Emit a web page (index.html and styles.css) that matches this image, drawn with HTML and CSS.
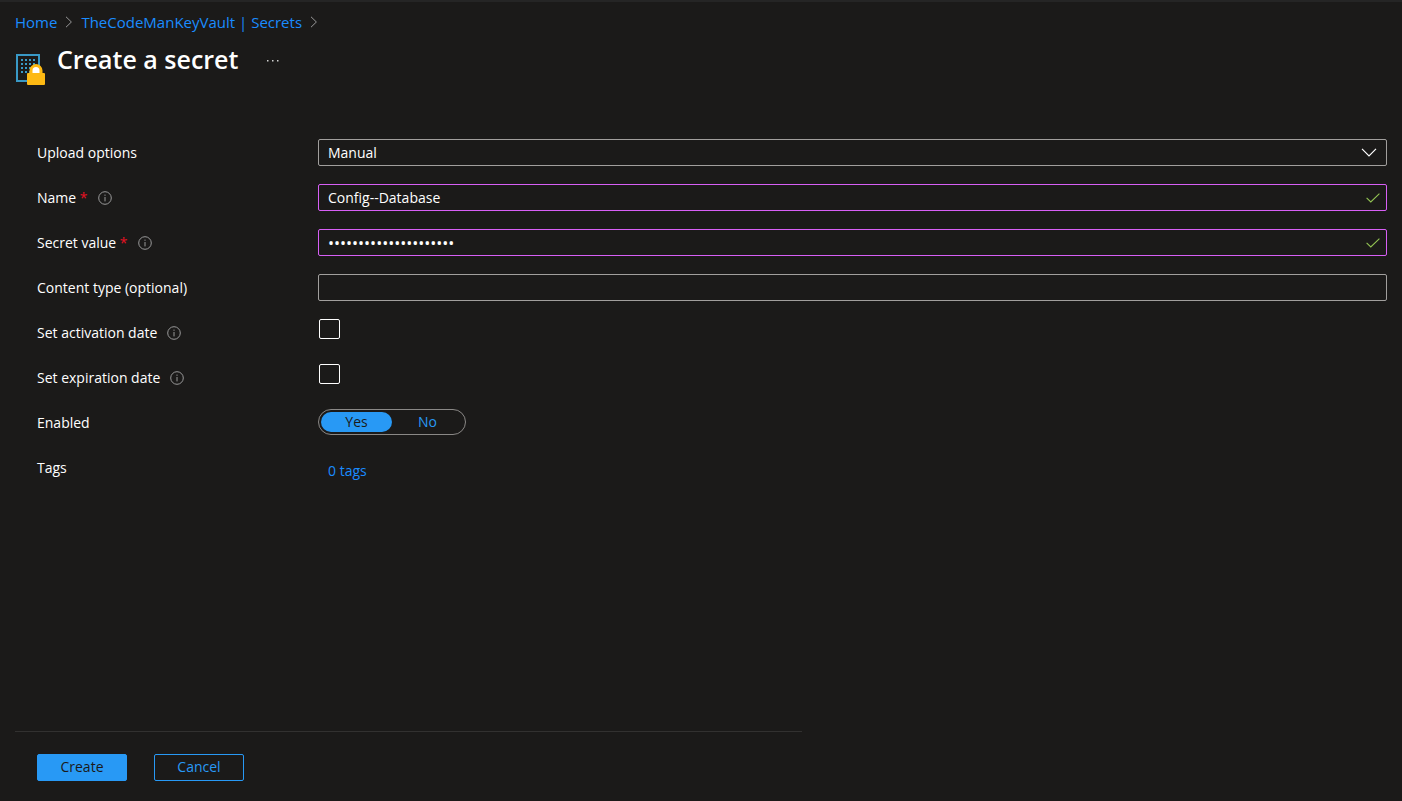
FILE: index.html
```html
<!DOCTYPE html>
<html lang="en">
<head>
<meta charset="utf-8">
<meta name="viewport" content="width=device-width, initial-scale=1">
<title>Create a secret</title>
<link rel="stylesheet" href="styles.css">
</head>
<body>
<svg class="symbols" aria-hidden="true">
  <symbol id="info" viewBox="0 0 14 14"><circle cx="7" cy="7" r="6.3" fill="none" stroke="currentColor"/><path d="M7 6v4.4M7 3.6v1.2" fill="none" stroke="currentColor"/></symbol>
  <symbol id="check" viewBox="0 0 14 10"><path d="M.6 4.8 4.8 9 13.4.6" fill="none" stroke="currentColor" stroke-width="1.1"/></symbol>
  <symbol id="crumb" viewBox="0 0 8 12"><path d="M1 .8 6.4 6 1 11.2" fill="none" stroke="currentColor"/></symbol>
</svg>
<header class="header">
  <nav class="breadcrumb" aria-label="Breadcrumb">
    <a href="#">Home</a>
    <svg class="crumb"><use href="#crumb"/></svg>
    <a href="#">TheCodeManKeyVault | Secrets</a>
    <svg class="crumb"><use href="#crumb"/></svg>
  </nav>
  <div class="heading">
    <svg class="logo" viewBox="0 0 30 32" aria-hidden="true">
      <rect x="1" y="1" width="22" height="26" fill="none" stroke="#3999c6" stroke-width="2"/>
      <path d="M5 6h14M5 10h14M5 14h14M5 18h14" fill="none" stroke="#3999c6" stroke-width="2" stroke-dasharray="2 2"/>
      <path d="M15 20v-3.500a5 5 0 0 1 10 0V20" fill="#fff" stroke="#fdb913" stroke-width="3"/>
      <rect x="11" y="19" width="18" height="12" rx="1" fill="#fdb913"/>
    </svg>
    <h1 class="title">Create a secret</h1>
    <button class="more" type="button" aria-label="More actions"><svg width="14" height="2" viewBox="0 0 14 2"><path d="M1 0h1.500v1.500H1zM6 0h1.500v1.500H6zM11 0h1.500v1.500H11z" fill="#d0d0d0"/></svg></button>
  </div>
</header>
<form class="form">
  <div class="fields">
    <div class="row">
      <div class="caption"><label for="upload">Upload options</label></div>
      <div class="control">
        <select class="box" id="upload"><option>Manual</option></select>
        <svg class="mark chevron" viewBox="0 0 16 9" aria-hidden="true"><path d="M1 .8 8 7.800 15 .8" fill="none" stroke="#fff" stroke-width="1.200"/></svg>
      </div>
    </div>
    <div class="row">
      <div class="caption"><label for="name">Name <span class="required">*</span></label><button class="info" type="button" aria-label="About name"><svg><use href="#info"/></svg></button></div>
      <div class="control">
        <input class="box valid" id="name" type="text" value="Config--Database">
        <svg class="mark check"><use href="#check"/></svg>
      </div>
    </div>
    <div class="row">
      <div class="caption"><label for="secret">Secret value <span class="required">*</span></label><button class="info" type="button" aria-label="About secret value"><svg><use href="#info"/></svg></button></div>
      <div class="control">
        <input class="box valid password" id="secret" type="password" value="connection-string-val">
        <svg class="mark check"><use href="#check"/></svg>
      </div>
    </div>
    <div class="row">
      <div class="caption"><label for="content">Content type (optional)</label></div>
      <div class="control"><input class="box" id="content" type="text"></div>
    </div>
    <div class="row">
      <div class="caption"><label for="activation">Set activation date</label><button class="info" type="button" aria-label="About activation date"><svg><use href="#info"/></svg></button></div>
      <div class="control"><input class="tick" id="activation" type="checkbox"></div>
    </div>
    <div class="row">
      <div class="caption"><label for="expiration">Set expiration date</label><button class="info" type="button" aria-label="About expiration date"><svg><use href="#info"/></svg></button></div>
      <div class="control"><input class="tick" id="expiration" type="checkbox"></div>
    </div>
    <div class="row">
      <div class="caption" id="enabled">Enabled</div>
      <div class="control">
        <div class="toggle" role="radiogroup" aria-labelledby="enabled">
          <input class="radio" type="radio" name="enabled" id="yes" checked><label class="option" for="yes">Yes</label>
          <input class="radio" type="radio" name="enabled" id="no"><label class="option" for="no">No</label>
        </div>
      </div>
    </div>
    <div class="row">
      <div class="caption">Tags</div>
      <div class="control"><a class="tags" href="#">0 tags</a></div>
    </div>
  </div>
  <div class="footer">
    <button class="button primary" type="submit">Create</button>
    <button class="button" type="button">Cancel</button>
  </div>
</form>
</body>
</html>
```
FILE: styles.css
```css
* { box-sizing: border-box; }
body {
  margin: 0;
  min-height: 100vh;
  display: flex;
  flex-direction: column;
  border-top: 2px solid #252525;
  background: #1b1a19;
  color: #fff;
  font: 14px/20px "Open Sans", "Noto Sans", sans-serif;
}
a { color: #2899f5; text-decoration: none; }
button, input, select { font: inherit; color: inherit; margin: 0; }
.symbols { position: absolute; width: 0; height: 0; }
.header { padding: 10px 15px 0; }
.breadcrumb { display: flex; align-items: center; gap: 8px; font-size: 15px; color: #999; }
.breadcrumb a { color: #1a8cff; }
.crumb { width: 8px; height: 12px; }
.heading { display: flex; align-items: flex-start; padding-top: 9px; }
.logo { width: 30px; height: 32px; margin: 13px 11px 0 1px; }
.title { margin: 0; font-size: 25px; line-height: 36px; font-weight: 600; }
.more { display: flex; margin: 19px 0 0 28px; padding: 0; border: 0; background: none; }
.form { flex: 1; display: flex; flex-direction: column; }
.fields { display: grid; gap: 18px; padding: 53px 15px 20px 37px; }
.row { display: grid; grid-template-columns: 281px 1fr; height: 27px; }
.caption { display: flex; align-items: center; height: 28px; }
.required { color: #e81123; }
.info { display: flex; margin-left: 10px; padding: 0; border: 0; background: none; color: #999; }
.info svg { width: 14px; height: 14px; }
.control { position: relative; display: flex; align-items: flex-start; }
.box {
  width: 100%;
  height: 27px;
  padding: 0 30px 0 9px;
  border: 1px solid #a19f9d;
  border-radius: 2px;
  background: transparent;
  appearance: none;
  outline: 0;
}
.valid { border-color: #d75ff5; }
.password { font-size: 16px; }
.mark { position: absolute; right: 7px; top: 9px; width: 14px; height: 10px; color: #92c353; }
.chevron { right: 10px; width: 16px; height: 9px; }
.tick { appearance: none; width: 21px; height: 20px; margin-left: 1px; border: 1px solid #fff; border-radius: 2px; }
.toggle { display: flex; width: 148px; height: 26px; padding: 2px; border: 1px solid #8a8886; border-radius: 13px; }
.radio { position: absolute; opacity: 0; }
.option { width: 71px; border-radius: 10px; text-align: center; color: #2899f5; }
.radio:checked + .option { background: #2899f5; color: #1b1a19; }
.tags { padding: 7px 0 0 10px; color: #1a8cff; }
.footer {
  display: flex;
  gap: 27px;
  width: 100%;
  max-width: 787px;
  margin: auto 15px 0;
  padding: 22px 22px 20px;
  border-top: 1px solid #323130;
}
.button {
  width: 90px;
  height: 27px;
  padding: 0 0 2px;
  border: 1px solid #2899f5;
  border-radius: 2px;
  background: transparent;
  color: #2899f5;
  font-weight: 500;
}
.primary { background: #2899f5; color: #1b1a19; }
```
